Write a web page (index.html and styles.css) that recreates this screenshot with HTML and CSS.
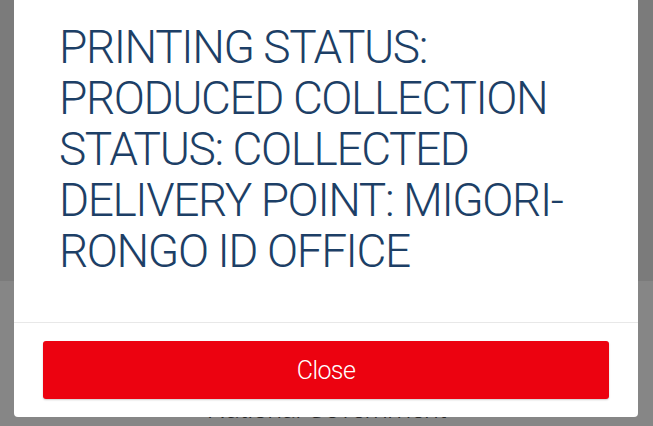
FILE: index.html
```html
<!DOCTYPE html>
<html>
<head>
<meta charset="utf-8">
<link rel="stylesheet" href="styles.css">
</head>
<body>
<div class="page">
  <div class="page-top"></div>
  <div class="page-bottom">
    <p class="gov">National Government</p>
  </div>
</div>
<div class="modal">
  <div class="modal-body">
    <p class="status">PRINTING STATUS: PRODUCED COLLECTION STATUS: COLLECTED DELIVERY POINT: MIGORI-RONGO ID OFFICE</p>
  </div>
  <div class="modal-footer">
    <button class="close-btn">Close</button>
  </div>
</div>
</body>
</html>
```
FILE: styles.css
```css
html, body {
  margin: 0;
  padding: 0;
  width: 653px;
  height: 426px;
  overflow: hidden;
  font-family: "Roboto", "Liberation Sans", sans-serif;
}
.page {
  display: flex;
  flex-direction: column;
  height: 426px;
}
.page-top {
  height: 282px;
  background: #7b7b7b;
}
.page-bottom {
  flex: 1;
  background: #868686;
  display: flex;
  flex-direction: column;
  align-items: center;
}
.gov {
  margin: 111px 0 0;
  font-size: 27px;
  font-weight: 300;
  letter-spacing: -0.6px;
  line-height: 34px;
  color: #262626;
}
.modal {
  position: fixed;
  left: 14px;
  bottom: 9px;
  width: 624px;
  background: #fff;
  border-radius: 4px;
}
.modal-body {
  padding: 40px 45px 45px;
}
.status {
  margin: 0;
  font-size: 46px;
  font-weight: 300;
  letter-spacing: -1.4px;
  line-height: 51px;
  color: #1d3f66;
}
.modal-footer {
  border-top: 1px solid #e8e8e8;
  padding: 18px 29px;
}
.close-btn {
  display: block;
  width: 100%;
  height: 58px;
  border: none;
  border-radius: 3px;
  background: #ec0210;
  color: #fff;
  font-family: "Roboto", sans-serif;
  font-size: 25px;
  font-weight: 300;
  letter-spacing: -0.6px;
  box-shadow: 0 1px 2px rgba(0,0,0,0.2);
}
```
